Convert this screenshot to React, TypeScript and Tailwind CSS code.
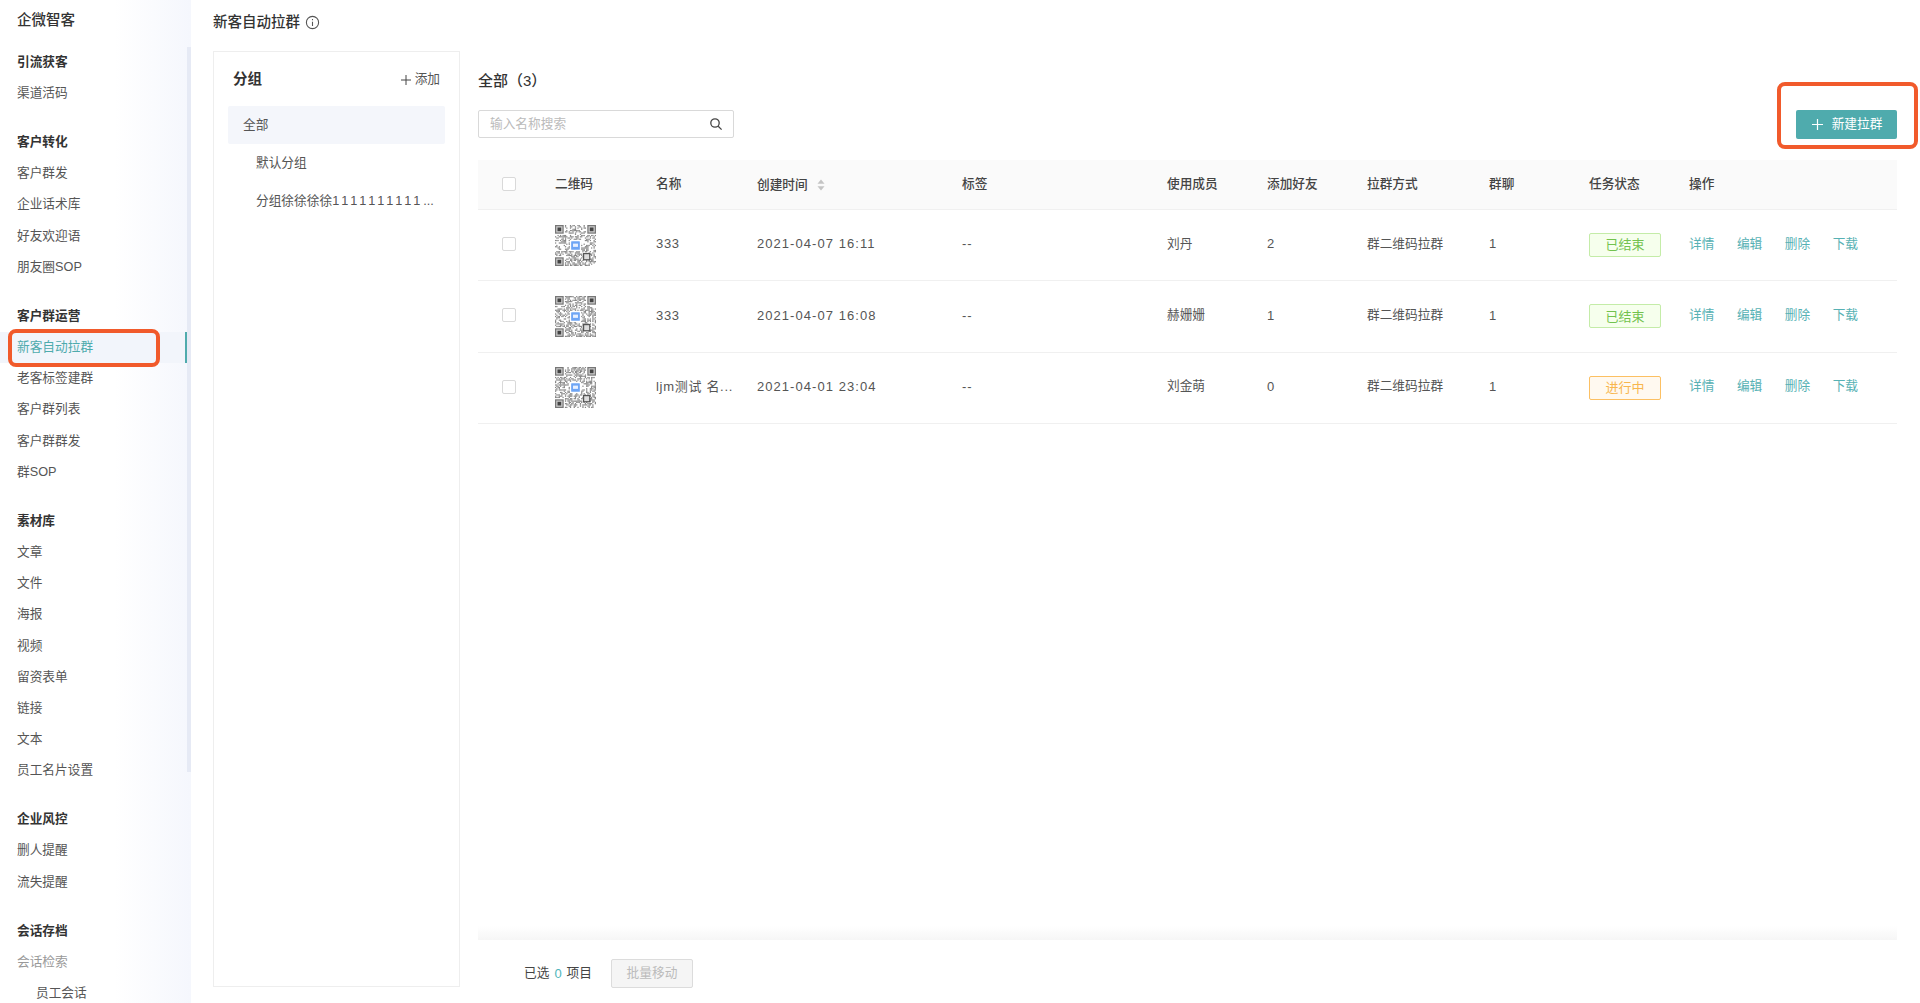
import React from "react";

const groups: { title: string; items: string[] }[] = [
  { title: "引流获客", items: ["渠道活码"] },
  { title: "客户转化", items: ["客户群发", "企业话术库", "好友欢迎语", "朋友圈SOP"] },
  { title: "客户群运营", items: ["新客自动拉群", "老客标签建群", "客户群列表", "客户群群发", "群SOP"] },
  { title: "素材库", items: ["文章", "文件", "海报", "视频", "留资表单", "链接", "文本", "员工名片设置"] },
  { title: "企业风控", items: ["删人提醒", "流失提醒"] },
  { title: "会话存档", items: ["会话检索", "员工会话"] },
];

const rows = [
  { seed: 7, name: "333", time: "2021-04-07 16:11", member: "刘丹", add: "2", status: "已结束" },
  { seed: 23, name: "333", time: "2021-04-07 16:08", member: "赫姗姗", add: "1", status: "已结束" },
  { seed: 51, name: "ljm测试 名...", time: "2021-04-01 23:04", member: "刘金萌", add: "0", status: "进行中" },
];

const gridCols = "grid grid-cols-[77px_101px_101px_205px_205px_100px_100px_122px_100px_100px_1fr] items-center";

function Qr({ seed }: { seed: number }) {
  const n = 33;
  let s = seed * 9301 + 49297;
  const rnd = () => {
    s = (s * 9301 + 49297) % 233280;
    return s / 233280;
  };
  const cells: React.ReactNode[] = [];
  const inFinder = (x: number, y: number) => (x < 8 && y < 8) || (x >= n - 8 && y < 8) || (x < 8 && y >= n - 8);
  for (let y = 0; y < n; y++) {
    for (let x = 0; x < n; x++) {
      if (!inFinder(x, y) && rnd() > 0.5) {
        cells.push(<rect key={`${x}-${y}`} x={x} y={y} width="1" height="1" fill="#858585" />);
      }
    }
  }
  const finder = (x: number, y: number) => (
    <g key={`f${x}-${y}`}>
      <rect x={x} y={y} width="7" height="7" fill="#777" />
      <rect x={x + 1} y={y + 1} width="5" height="5" fill="#ccc" />
      <rect x={x + 2} y={y + 2} width="3" height="3" fill="#444" />
    </g>
  );
  return (
    <svg width="41" height="41" viewBox="0 0 33 33" className="blur-[0.5px]">
      {cells}
      {finder(0, 0)}
      {finder(26, 0)}
      {finder(0, 26)}
      <rect x="23" y="23" width="5" height="5" fill="#ddd" stroke="#555" strokeWidth="1" />
      <rect x="12" y="12" width="9" height="9" fill="#fff" />
      <rect x="13" y="13" width="7" height="7" rx="0.5" fill="#6ea5f5" />
      <rect x="14.5" y="15" width="4" height="2.6" fill="#e8f0ff" />
    </svg>
  );
}

function Tag({ text }: { text: string }) {
  const done = text === "已结束";
  return (
    <span
      className={
        "flex h-[24px] w-[72px] items-center justify-center rounded-[2px] border text-[13px] " +
        (done
          ? "border-[#c4eca8] bg-[#f6ffed] text-[#72c24e]"
          : "border-[#fcc063] bg-[#fff9f0] text-[#f8b64e]")
      }
    >
      {text}
    </span>
  );
}

export default function App() {
  return (
    <div
      className="relative flex h-[1003px] w-full overflow-hidden bg-white text-[12.7px] text-[#333]"
      style={{ fontFamily: '"Liberation Sans", "Noto Sans CJK SC", sans-serif' }}
    >
      {/* Sidebar */}
      <aside className="relative h-full w-[191px] shrink-0 overflow-hidden bg-gradient-to-r from-white from-[60%] to-[#f5f7fd]">
        <div className="flex h-[42px] items-center pl-[17px] text-[14.5px] font-medium text-[#333]">企微智客</div>
        <nav className="flex flex-col gap-[18px] pt-[5px]">
          {groups.map((g) => (
            <div key={g.title} className="flex flex-col">
              <div className="flex h-[31px] items-center pl-[17px] font-semibold text-[#333]">{g.title}</div>
              {g.items.map((it) => {
                const active = it === "新客自动拉群";
                const dim = it === "会话检索";
                const sub = it === "员工会话";
                return (
                  <div
                    key={it}
                    className={
                      "flex h-[31.2px] items-center " +
                      (sub ? "pl-[36px] " : "pl-[17px] ") +
                      (active
                        ? "mr-[4px] border-r-2 border-[#4fabad] bg-[#f2f5fb] text-[#4fabad] "
                        : dim
                          ? "text-[#999] "
                          : "text-[#555] ")
                    }
                  >
                    {it}
                  </div>
                );
              })}
            </div>
          ))}
        </nav>
        <div className="absolute left-[187px] top-[47px] h-[725px] w-[4px] bg-[#e6eaf5]" />
      </aside>

      {/* Main */}
      <main className="flex min-w-0 flex-1 flex-col pb-[16px] pl-[22px] pr-[23px]">
        <div className="flex h-[51px] shrink-0 items-center gap-[5px] pb-[6px]">
          <span className="text-[14.5px] font-medium text-[#333]">新客自动拉群</span>
          <svg width="15" height="15" viewBox="0 0 14 14" fill="none" stroke="#555" strokeWidth="1">
            <circle cx="7" cy="7" r="5.7" />
            <path d="M7 6.2v4M7 3.8v1.2" />
          </svg>
        </div>

        <div className="flex min-h-0 flex-1 gap-[18px]">
          {/* Group panel */}
          <section className="flex w-[247px] shrink-0 flex-col border border-[#eeeeee] px-[14px]">
            <div className="flex h-[54px] shrink-0 items-center justify-between pl-[5px] pr-[5px] pt-[2px]">
              <span className="text-[14.5px] font-semibold text-[#333]">分组</span>
              <span className="flex items-center gap-[3px] text-[#555]">
                <svg width="12" height="12" viewBox="0 0 12 12" stroke="#444" strokeWidth="1">
                  <path d="M6 1v10M1 6h10" />
                </svg>
                添加
              </span>
            </div>
            <div className="flex h-[38px] items-center rounded-[2px] bg-[#f4f6fb] pl-[15px] pt-[1px] text-[#555]">全部</div>
            <div className="flex h-[38px] items-center pl-[28px] pt-[2px] text-[#555]">默认分组</div>
            <div className="flex h-[38px] items-center pl-[28px] pt-[2px] text-[#555]">
              <span className="whitespace-nowrap">
                分组徐徐徐徐<span className="tracking-[2.9px]">1111111111</span>...
              </span>
            </div>
          </section>

          {/* Content */}
          <section className="flex min-w-0 flex-1 flex-col">
            <div className="flex h-[59px] shrink-0 items-center pt-[2px] text-[15px] font-medium text-[#333]">
              全部（3）
            </div>
            <div className="flex h-[50px] shrink-0 items-start justify-between">
              <div className="flex h-[28px] w-[256px] items-center justify-between rounded-[2px] border border-[#d9d9d9] pl-[11px] pr-[10px]">
                <span className="pt-[1px] text-[#bbb]">输入名称搜索</span>
                <svg width="14" height="14" viewBox="0 0 14 14" fill="none" stroke="#444" strokeWidth="1.3">
                  <circle cx="6" cy="6" r="4.2" />
                  <path d="M9.2 9.2 12.6 12.6" />
                </svg>
              </div>
              <button className="flex h-[29px] w-[101px] items-center justify-center gap-[8px] rounded-[2px] bg-[#4fabad] text-white">
                <svg width="13" height="13" viewBox="0 0 13 13" stroke="#fff" strokeWidth="1.2">
                  <path d="M6.5 1v11M1 6.5h11" />
                </svg>
                新建拉群
              </button>
            </div>

            {/* Table */}
            <div className="flex min-h-0 flex-1 flex-col">
              <div className={gridCols + " h-[50px] shrink-0 border-b border-[#f0f0f0] bg-[#fafafa] font-medium text-[#444]"}>
                <span className="mb-[2px] ml-[24px] h-[14px] w-[14px] rounded-[2px] border border-[#d9d9d9] bg-white" />
                <span>二维码</span>
                <span>名称</span>
                <span className="flex items-center gap-[9px] pt-[2px]">
                  创建时间
                  <svg width="8" height="12" viewBox="0 0 8 12" fill="#c4c4c4">
                    <path d="M4 0.5 7.5 4.8H0.5Z" />
                    <path d="M4 11.5 0.5 7.2h7Z" />
                  </svg>
                </span>
                <span>标签</span>
                <span>使用成员</span>
                <span>添加好友</span>
                <span>拉群方式</span>
                <span>群聊</span>
                <span>任务状态</span>
                <span>操作</span>
              </div>
              {rows.map((r) => (
                <div key={r.seed} className={gridCols + " h-[71.3px] shrink-0 border-b border-[#f0f0f0] text-[#555]"}>
                  <span className="mb-[2px] ml-[24px] h-[14px] w-[14px] rounded-[2px] border border-[#d9d9d9] bg-white" />
                  <Qr seed={r.seed} />
                  <span className="pb-[2px] text-[13px] tracking-[0.7px]">{r.name}</span>
                  <span className="pb-[2px] text-[13px] tracking-[1.05px]">{r.time}</span>
                  <span className="pb-[2px] text-[13px] tracking-[1px]">--</span>
                  <span className="pb-[2px]">{r.member}</span>
                  <span className="pb-[2px] text-[13px]">{r.add}</span>
                  <span className="pb-[2px]">群二维码拉群</span>
                  <span className="pb-[2px] text-[13px]">1</span>
                  <Tag text={r.status} />
                  <span className="flex gap-[22.5px] pb-[2px] text-[#57b1b4]">
                    <span>详情</span>
                    <span>编辑</span>
                    <span>删除</span>
                    <span>下载</span>
                  </span>
                </div>
              ))}
              <div className="flex-1" />
              <div className="h-[14px] shrink-0 bg-gradient-to-b from-white to-[#f6f6f6]" />
            </div>

            {/* Footer */}
            <div className="flex h-[47px] shrink-0 items-start pl-[46px] pt-[19px]">
              <span className="flex h-[29px] items-center text-[#444]">
                已选<span className="mx-[5px] text-[13px] text-[#4fb5ba]">0</span>项目
              </span>
              <span className="ml-[19px] flex h-[29px] w-[82px] items-center justify-center rounded-[2px] border border-[#dcdcdc] bg-[#f5f5f5] text-[#bbb]">
                批量移动
              </span>
            </div>
          </section>
        </div>
      </main>

      {/* Red annotation boxes */}
      <div className="pointer-events-none absolute left-[8px] top-[329px] h-[38px] w-[152px] rounded-[8px] border-[4px] border-[#f15a2b]" />
      <div className="pointer-events-none absolute left-[1777px] top-[82px] h-[67px] w-[141px] rounded-[8px] border-[4px] border-[#f15a2b]" />
    </div>
  );
}
